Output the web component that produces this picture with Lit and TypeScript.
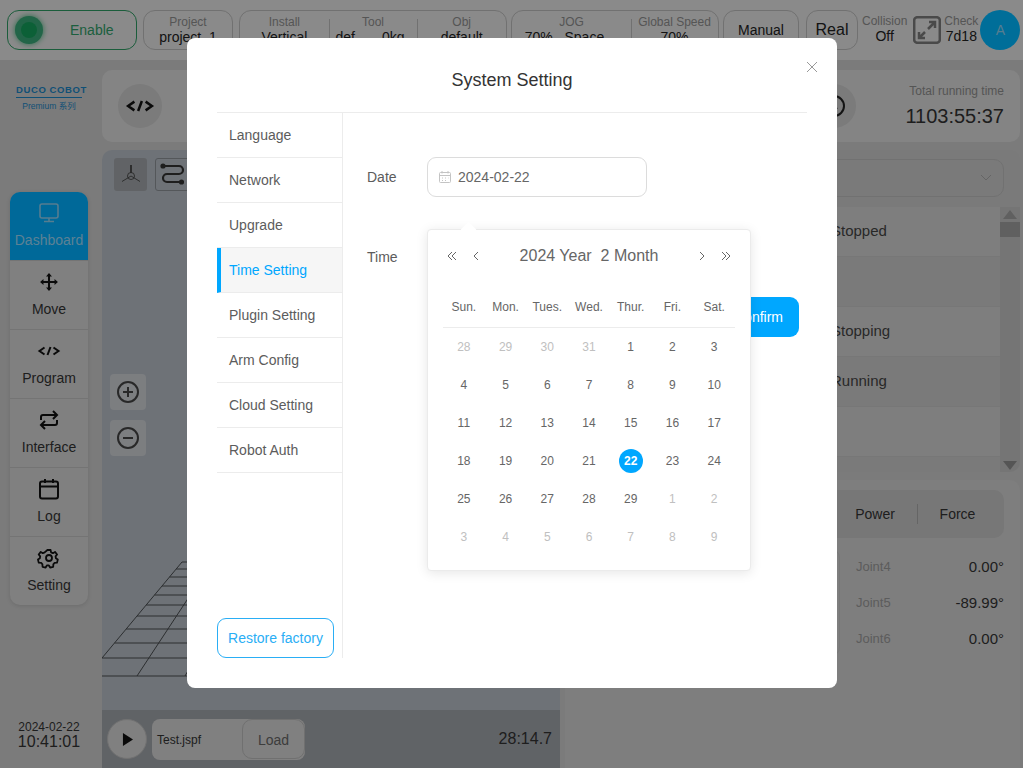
import { LitElement, html, css, svg } from "lit";
import { customElement } from "lit/decorators.js";

const weeks = ["Sun.", "Mon.", "Tues.", "Wed.", "Thur.", "Fri.", "Sat."];
const days: [number, boolean][] = [];
[28, 29, 30, 31].forEach((d) => days.push([d, false]));
for (let d = 1; d <= 29; d++) days.push([d, true]);
for (let d = 1; d <= 9; d++) days.push([d, false]);

const menu = ["Language", "Network", "Upgrade", "Time Setting", "Plugin Setting", "Arm Config", "Cloud Setting", "Robot Auth"];

const gridY = [562, 569, 577, 586, 595, 605, 616, 629, 643, 658, 676];

const icons: Record<string, unknown> = {
  monitor: svg`<rect x="3" y="3" width="18" height="14" rx="2" fill="none" stroke="currentColor" stroke-width="1.6"/><path d="M12 17v3M7 20.5h10" stroke="currentColor" stroke-width="1.6" fill="none"/>`,
  move: svg`<g transform="translate(1.800 1.800) scale(.85)"><path d="M12 3v18M3 12h18" stroke="currentColor" stroke-width="2.400" fill="none"/><path d="M12 1.5l3.500 4H8.500zM12 22.500l3.500-4H8.500zM1.500 12l4-3.500v7zM22.500 12l-4-3.500v7z" fill="currentColor"/></g>`,
  code: svg`<path d="M7.500 8.500l-5 3.500 5 3.500M16.500 8.500l5 3.500-5 3.500M13.500 8l-3 8" stroke="currentColor" stroke-width="2" fill="none"/>`,
  swap: svg`<path d="M4 12V9a2 2 0 0 1 2-2h13M16 3l4 4-4 4M20 12v3a2 2 0 0 1-2 2H5M8 13l-4 4 4 4" stroke="currentColor" stroke-width="2" fill="none"/>`,
  cal: svg`<rect x="3" y="4.500" width="18" height="17" rx="2" fill="none" stroke="currentColor" stroke-width="2"/><path d="M3 9.500h18M8 2v4M16 2v4" stroke="currentColor" stroke-width="2" fill="none"/>`,
  gear: svg`<path d="M10 2h4l.6 3 2.300 1 2.600-1.600 2.600 3.200-1.900 2.400.4 2.400 2.400 1.600-1 3.900-3 .1-1.600 2-.1 3-3.900.9-1.500-2.600h-2.600l-1.500 2.600-3.900-.9-.1-3-1.600-2-3-.1-1-3.900 2.400-1.600.4-2.400-1.900-2.400 2.600-3.200 2.600 1.600 2.300-1z" fill="none" stroke="currentColor" stroke-width="2.200" stroke-linejoin="round" transform="translate(2.400 2.400) scale(.8)"/><circle cx="12" cy="12" r="3" fill="none" stroke="currentColor" stroke-width="1.800"/>`,
};
const icon = (n: string, size = 24) => html`<svg width=${size} height=${size} viewBox="0 0 24 24">${icons[n]}</svg>`;

@customElement("app-root")
export class AppRoot extends LitElement {
  static styles = css`
    :host { display: block; font-family: "Liberation Sans", Arial, sans-serif; color: #222; }
    * { box-sizing: border-box; }
    .page { position: relative; width: 1023px; height: 768px; overflow: hidden; background: #cdcdcd; display: flex; flex-direction: column; }

    .top { height: 60px; background: #e6e6e6; display: flex; align-items: flex-start; padding: 10px 3px 0 7px; flex: none; }
    .pill { height: 40px; border: 1px solid #bdbdbd; border-radius: 12px; display: flex; flex: none; }
    .enable { width: 130px; border-color: #2e9b63; align-items: center; color: #2f9e68; font-size: 14px; padding-left: 7px; margin-right: 6px; }
    .led { width: 28px; height: 28px; border-radius: 50%; background: #3aa878; box-shadow: 0 0 5px 1px #6cc096; position: relative; margin-right: 27px; }
    .led::after { content: ""; position: absolute; inset: 0; margin: auto; width: 16px; height: 16px; border-radius: 50%; background: #15a05c; }
    .cell { flex: 1; text-align: center; position: relative; font-size: 14px; line-height: 16px; padding-top: 4px; white-space: nowrap; }
    .cell small { display: block; font-size: 12px; line-height: 14px; color: #8e8e8e; }
    .cell + .cell::before { content: ""; position: absolute; left: 0; top: 8px; height: 22px; width: 1px; background: #bdbdbd; }
    .shift { display: inline-block; margin-right: 14px; }
    .shift2 { display: inline-block; margin-right: 6px; word-spacing: .6px; }
    .center { align-items: center; justify-content: center; font-size: 14px; }
    .real { font-size: 16px; }
    .stat { text-align: center; font-size: 14px; line-height: 16px; padding-top: 4px; flex: none; }
    .stat small { display: block; font-size: 12px; line-height: 14px; color: #8e8e8e; }
    .avatar { width: 40px; height: 40px; border-radius: 50%; background: #00b8ff; display: flex; align-items: center; justify-content: center; font-size: 14px; flex: none; color: #8fd0f0; }
    .expand { flex: none; margin: 6px 3px 0 6px; color: #7c7c7c; display: block; }

    .main { flex: 1; display: flex; min-height: 0; }
    .rail { width: 102px; flex: none; display: flex; flex-direction: column; align-items: flex-start; padding-top: 25px; }
    .logo { text-align: center; color: #1c86c5; height: 107px; width: 66px; margin-left: 16px; flex: none; }
    .logo b { display: block; font: 700 9.500px/9px "Liberation Sans", sans-serif; letter-spacing: .6px; white-space: nowrap; border-bottom: 1.500px solid #1c86c5; padding-bottom: 3px; }
    .logo span { display: block; font-size: 8.500px; line-height: 12px; margin-top: 2px; font-family: "Liberation Sans", "Noto Sans CJK SC", sans-serif; white-space: nowrap; }
    .nav { width: 78px; margin-left: 10px; border-radius: 10px; overflow: hidden; background: #d5d5d5; box-shadow: 0 1px 4px rgba(0,0,0,.12); flex: none; }
    .nav div { height: 69px; display: flex; flex-direction: column; align-items: center; padding-top: 9px; font-size: 14px; line-height: 16px; border-top: 1px solid #c2c2c2; gap: 7px; color: #333; }
    .nav div:first-child { border-top: 0; height: 68px; }
    .nav div svg { color: #111; }
    .nav .on { background: #00afff; color: #9ad8f8; }
    .nav .on svg { color: #8fd0f0; }
    .clock { margin: 115px 0 0 10px; width: 78px; text-align: center; font-size: 12px; line-height: 14px; color: #333; white-space: nowrap; }
    .clock b { display: block; font-weight: 400; font-size: 16px; line-height: 16px; }

    .content { flex: 1; min-width: 0; padding: 10px 3px 0 0; display: flex; flex-direction: column; gap: 8px; }
    .strip { height: 72px; flex: none; background: #dcdcdc; border-radius: 10px; display: flex; align-items: center; justify-content: space-between; padding: 0 16px 0 16px; }
    .round { width: 44px; height: 44px; border-radius: 50%; background: #cdcdcd; display: flex; align-items: center; justify-content: center; color: #111; }
    .strip-right { display: flex; align-items: center; gap: 49px; }
    .total { text-align: right; font-size: 12px; color: #8e8e8e; line-height: 14px; }
    .total b { display: block; margin-top: 6px; font-weight: 400; font-size: 20px; line-height: 24px; color: #333; }

    .lower { flex: 1; display: flex; gap: 5px; min-height: 0; }
    .viewer { width: 458px; flex: none; border-radius: 10px 10px 0 0; background: #b7bec6; position: relative; display: flex; flex-direction: column; overflow: hidden; }
    .grid3d { position: absolute; left: 0; top: 0; }
    .tools { display: flex; gap: 8px; padding: 8px 12px; position: relative; }
    .tool { width: 33px; height: 33px; border-radius: 3px; background: #a2a6aa; display: flex; align-items: center; justify-content: center; }
    .tool.alt { width: 35px; background: transparent; border: 1px solid #8d9197; }
    .zoomers { display: flex; flex-direction: column; gap: 10px; margin: 175px 0 0 8px; position: relative; flex: none; }
    .zbtn { width: 36px; height: 36px; border-radius: 4px; background: #cfd2d6; display: flex; align-items: center; justify-content: center; color: #444; }
    .player { margin-top: auto; height: 58px; background: #a0a5aa; display: flex; align-items: center; padding: 0 8px 0 5px; position: relative; flex: none; }
    .play { width: 40px; height: 40px; border-radius: 50%; background: #d5d5d5; border: 1px solid #bdbdbd; display: flex; align-items: center; justify-content: center; margin-right: 5px; flex: none; }
    .file { width: 153px; height: 41px; border-radius: 8px; background: #d5d5d5; display: flex; align-items: center; justify-content: space-between; padding-left: 5px; font-size: 12px; color: #333; flex: none; }
    .fname { padding-top: 2px; }
    .load { width: 63px; height: 40px; border: 1px solid #bbb; border-radius: 10px; display: flex; align-items: center; justify-content: center; font-size: 14px; color: #666; padding-top: 1px; }
    .elapsed { margin-left: auto; font-size: 16px; color: #333; }

    .side { flex: 1; min-width: 0; display: flex; flex-direction: column; gap: 8px; }
    .p1 { height: 322px; flex: none; border-radius: 10px; background: #cbcbcb; padding-top: 9px; display: flex; flex-direction: column; gap: 10px; overflow: hidden; }
    .select { height: 38px; border: 1px solid #bcbcbc; border-radius: 10px; display: flex; align-items: center; justify-content: flex-end; padding-right: 10px; color: #a8a8a8; margin: 0 16px 0 8px; flex: none; }
    .listwrap { display: flex; margin-left: 8px; }
    .rows { flex: 1; }
    .row { height: 50px; padding: 15px 0 0 258px; font-size: 15px; line-height: 18px; color: #444; background: #d3d3d3; border-bottom: 1px solid #c6c6c6; }
    .row:nth-child(even) { background: #cbcbcb; }
    .sb { width: 20px; flex: none; background: #c4c4c4; display: flex; flex-direction: column; align-items: center; height: 265px; }
    .sb i { display: block; width: 0; height: 0; border: 7px solid transparent; }
    .sb .up { border-bottom: 9px solid #a0a0a0; border-top: 0; margin-top: 3px; }
    .sb .thumb { width: 20px; height: 15px; background: #a0a0a0; margin-top: 3px; }
    .sb .dn { border-top: 9px solid #8e8e8e; border-bottom: 0; margin-top: auto; margin-bottom: 2px; }
    .p2 { flex: 1; border-radius: 10px 10px 0 0; background: #d2d2d2; padding: 10px 16px 0 0; }
    .tabs { height: 48px; background: #c6c6c6; border-radius: 10px; display: flex; align-items: center; justify-content: flex-end; font-size: 14px; color: #333; margin-left: 10px; }
    .tabs span { width: 84px; text-align: center; }
    .tabs span + span { border-left: 1px solid #a8a8a8; line-height: 20px; width: 87px; padding-right: 7px; }
    .jrow { display: flex; margin-top: 10px; gap: 16px; }
    .card { width: 265px; margin-left: 10px; height: 109px; border: 1px solid #c8c8c8; border-radius: 10px; flex: none; }
    .joints { flex: 1; }
    .joint { height: 36px; display: flex; align-items: center; justify-content: space-between; font-size: 15px; color: #333; }
    .joint em { font-style: normal; font-size: 13px; color: #9a9a9a; }

    .mask { position: absolute; inset: 0; background: rgba(0,0,0,.4); display: flex; align-items: flex-start; justify-content: center; padding-top: 38px; }
    .modal { width: 650px; height: 650px; background: #fff; border-radius: 8px; padding: 0 30px; display: flex; flex-direction: column; position: relative; margin-left: 1px; }
    .title { height: 75px; flex: none; border-bottom: 1px solid #ececec; display: flex; align-items: center; justify-content: center; font-size: 18px; color: #333; padding-top: 10px; }
    .close { position: absolute; right: 18px; top: 22px; color: #999; display: block; }
    .body { flex: 1; display: flex; min-height: 0; padding-bottom: 30px; }
    .menu { width: 126px; flex: none; border-right: 1px solid #ececec; display: flex; flex-direction: column; }
    .item { height: 45px; flex: none; display: flex; align-items: center; padding-left: 12px; font-size: 14px; color: #5c5c5c; border-bottom: 1px solid #ececec; }
    .item.on { color: #00a7ff; background: #f6f6f6; border-left: 4px solid #00a7ff; padding-left: 8px; }
    .restore { margin-top: auto; width: 117px; height: 40px; border: 1px solid #2aaef5; border-radius: 9px; display: flex; align-items: center; justify-content: center; font-size: 14px; color: #2aaef5; white-space: nowrap; }
    .pane { flex: 1; position: relative; padding: 44px 0 0 24px; }
    .line { display: flex; align-items: center; font-size: 14px; color: #5c5c5c; height: 40px; }
    .line label { width: 60px; flex: none; }
    .input { width: 220px; height: 40px; border: 1px solid #dcdcdc; border-radius: 9px; display: flex; align-items: center; padding-left: 10px; gap: 6px; color: #666; }
    .time { margin-top: 40px; }
    .confirm { position: absolute; right: 8px; top: 184px; width: 100px; height: 40px; background: #00a7ff; border-radius: 9px; color: #fff; font-size: 14px; display: flex; align-items: center; justify-content: flex-end; padding-right: 16px; }
    .cal { position: absolute; left: 84px; top: 116px; width: 324px; height: 342px; background: #fff; border: 1px solid #ebebeb; border-radius: 4px; box-shadow: 0 2px 12px rgba(0,0,0,.1); padding: 0 15px; color: #555; }
    .cal::before { content: ""; position: absolute; left: 35px; top: -6px; width: 11px; height: 11px; background: #fff; transform: rotate(45deg); }
    .calhead { height: 51px; padding: 0 3px; margin-bottom: 2px; display: flex; align-items: center; justify-content: space-between; }
    .calhead span { font-size: 16px; color: #666; white-space: pre; }
    .navs { display: flex; gap: 12px; color: #666; }
    .navs svg { display: block; }
    .cols { display: grid; grid-template-columns: repeat(7, 1fr); }
    .wk { height: 45px; border-bottom: 1px solid #ececec; }
    .wk span { display: flex; align-items: center; justify-content: center; font-size: 12px; height: 44px; padding-top: 4px; color: #666; }
    .d { height: 38px; display: flex; align-items: center; justify-content: center; font-size: 12px; color: #666; }
    .d.off { color: #c0c0c0; }
    .d i { font-style: normal; width: 24px; height: 24px; border-radius: 50%; display: flex; align-items: center; justify-content: center; }
    .d.sel i { background: #00a7ff; color: #fff; font-weight: 700; }
  `;

  render() {
    return html`
      <div class="page">
        <header class="top">
          <div class="pill enable"><span class="led"></span>Enable</div>
          <div class="pill" style="width:90px;margin-right:6px"><div class="cell"><small>Project</small>project_1</div></div>
          <div class="pill" style="width:268px;margin-right:4px">
            <div class="cell"><small>Install</small>Vertical</div>
            <div class="cell"><small>Tool</small><span class="shift2">def &nbsp; &nbsp; &nbsp;0kg</span></div>
            <div class="cell"><small>Obj</small>default</div>
          </div>
          <div class="pill" style="width:208px;margin-right:4px">
            <div class="cell" style="flex:none;width:119px"><small>JOG</small><span class="shift">70% &nbsp; Space</span></div>
            <div class="cell"><small>Global Speed</small>70%</div>
          </div>
          <div class="pill center" style="width:76px;margin-right:7px">Manual</div>
          <div class="pill center real" style="width:52px;margin-right:4px">Real</div>
          <div class="stat"><small>Collision</small>Off</div>
          <svg class="expand" width="28" height="28" viewBox="0 0 28 28" fill="none" stroke="currentColor" stroke-width="2.500"><rect x="1.200" y="1.200" width="25.600" height="25.600" rx="3"/><path d="M16 6h6v6M22 6l-7 7M6 16v6h6M6 22l6-6"/></svg>
          <div class="stat" style="margin-right:2px"><small>Check</small>7d18</div>
          <div class="avatar">A</div>
        </header>
        <div class="main">
          <aside class="rail">
            <div class="logo"><b>DUCO COBOT</b><span>Premium 系列</span></div>
            <nav class="nav">
              <div class="on">${icon("monitor")}Dashboard</div>
              <div>${icon("move")}Move</div>
              <div>${icon("code")}Program</div>
              <div>${icon("swap")}Interface</div>
              <div>${icon("cal")}Log</div>
              <div>${icon("gear")}Setting</div>
            </nav>
            <div class="clock">2024-02-22<b>10:41:01</b></div>
          </aside>
          <section class="content">
            <div class="strip">
              <div class="round">${icon("code", 30)}</div>
              <div class="strip-right">
                <div class="round"><svg width="24" height="24" viewBox="0 0 24 24" fill="none" stroke="#222" stroke-width="2"><circle cx="12" cy="12" r="10"/><path d="M12 7v5l3 3"/></svg></div>
                <div class="total">Total running time<b>1103:55:37</b></div>
              </div>
            </div>
            <div class="lower">
              <div class="viewer">
                <svg class="grid3d" width="458" height="618" viewBox="102 150 458 618" fill="none" stroke="#4a4d50" stroke-width="1">
                  ${gridY.map((y) => {
                    const x = y > 658 ? 102 : 182 - ((y - 562) * 80) / 96;
                    return svg`<path d="M${x} ${y}H400"/>`;
                  })}
                  <path d="M102 658L182 562M137 676L187 600L240 520M185 676L200 650"/>
                </svg>
                <div class="tools">
                  <div class="tool"><svg width="28" height="28" viewBox="0 0 28 28" fill="none" stroke="#444" stroke-width=".9"><path d="M14 4v8" stroke-width="1.800"/><circle cx="14" cy="15" r="3.500"/><path d="M14 15L5 20.500M14 15l9 5.500"/></svg></div>
                  <div class="tool alt"><svg width="28" height="28" viewBox="0 0 28 28" fill="none" stroke="#333" stroke-width="2.200"><path d="M4 5h16a4 4 0 0 1 0 8H8a4 4 0 0 0 0 8h14.500"/><circle cx="4" cy="5" r="1.500" fill="#333"/><circle cx="22.500" cy="21" r="1.500" fill="#333"/></svg></div>
                </div>
                <div class="zoomers">
                  <div class="zbtn"><svg width="24" height="24" viewBox="0 0 24 24" fill="none" stroke="currentColor" stroke-width="2"><circle cx="12" cy="12" r="10"/><path d="M12 7v10M7 12h10"/></svg></div>
                  <div class="zbtn"><svg width="24" height="24" viewBox="0 0 24 24" fill="none" stroke="currentColor" stroke-width="2"><circle cx="12" cy="12" r="10"/><path d="M7 12h10"/></svg></div>
                </div>
                <div class="player">
                  <div class="play"><svg width="11" height="13" viewBox="0 0 12 14"><path d="M1 0l11 7-11 7z" fill="#111"/></svg></div>
                  <div class="file"><span class="fname">Test.jspf</span><div class="load">Load</div></div>
                  <div class="elapsed">28:14.7</div>
                </div>
              </div>
              <div class="side">
                <div class="p1">
                  <div class="select"><svg width="14" height="8" viewBox="0 0 14 8" fill="none" stroke="currentColor"><path d="M2 1l5 5 5-5"/></svg></div>
                  <div class="listwrap">
                    <div class="rows">
                      <div class="row">Stopped</div>
                      <div class="row"></div>
                      <div class="row">Stopping</div>
                      <div class="row">Running</div>
                      <div class="row"></div>
                    </div>
                    <div class="sb"><i class="up"></i><div class="thumb"></div><i class="dn"></i></div>
                  </div>
                </div>
                <div class="p2">
                  <div class="tabs"><span>Power</span><span>Force</span></div>
                  <div class="jrow">
                    <div class="card"></div>
                    <div class="joints">
                      <div class="joint"><em>Joint4</em>0.00°</div>
                      <div class="joint"><em>Joint5</em>-89.99°</div>
                      <div class="joint"><em>Joint6</em>0.00°</div>
                    </div>
                  </div>
                </div>
              </div>
            </div>
          </section>
        </div>

        <div class="mask">
          <div class="modal">
            <div class="title">System Setting</div>
            <svg class="close" width="14" height="14" viewBox="0 0 14 14" stroke="currentColor" fill="none"><path d="M2 2l10 10M12 2L2 12"/></svg>
            <div class="body">
              <div class="menu">
                ${menu.map((m) => html`<div class="item ${m === "Time Setting" ? "on" : ""}">${m}</div>`)}
                <div class="restore">Restore factory</div>
              </div>
              <div class="pane">
                <div class="line"><label>Date</label>
                  <div class="input">
                    <svg width="14" height="14" viewBox="0 0 14 14" fill="none" stroke="#c4c4c4"><rect x="1.500" y="2.500" width="11" height="10" rx="1"/><path d="M1.500 5.500h11M4 1v2.500M10 1v2.500M4 8h1M7 8h1M10 8h.5M4 10.500h1M7 10.500h1"/></svg>
                    2024-02-22
                  </div>
                </div>
                <div class="line time"><label>Time</label></div>
                <div class="confirm">Confirm</div>
                <div class="cal">
                  <div class="calhead">
                    <div class="navs">
                      <svg width="12" height="12" viewBox="0 0 12 12" fill="none" stroke="currentColor"><path d="M6 2L2 6l4 4M10 2L6 6l4 4"/></svg>
                      <svg width="12" height="12" viewBox="0 0 12 12" fill="none" stroke="currentColor"><path d="M8 2L4 6l4 4"/></svg>
                    </div>
                    <span>2024 Year  2 Month</span>
                    <div class="navs">
                      <svg width="12" height="12" viewBox="0 0 12 12" fill="none" stroke="currentColor"><path d="M4 2l4 4-4 4"/></svg>
                      <svg width="12" height="12" viewBox="0 0 12 12" fill="none" stroke="currentColor"><path d="M2 2l4 4-4 4M6 2l4 4-4 4"/></svg>
                    </div>
                  </div>
                  <div class="cols wk">${weeks.map((w) => html`<span>${w}</span>`)}</div>
                  <div class="cols">
                    ${days.map(([d, cur]) => html`<div class="d ${cur ? "" : "off"} ${cur && d === 22 ? "sel" : ""}"><i>${d}</i></div>`)}
                  </div>
                </div>
              </div>
            </div>
          </div>
        </div>
      </div>
    `;
  }
}
